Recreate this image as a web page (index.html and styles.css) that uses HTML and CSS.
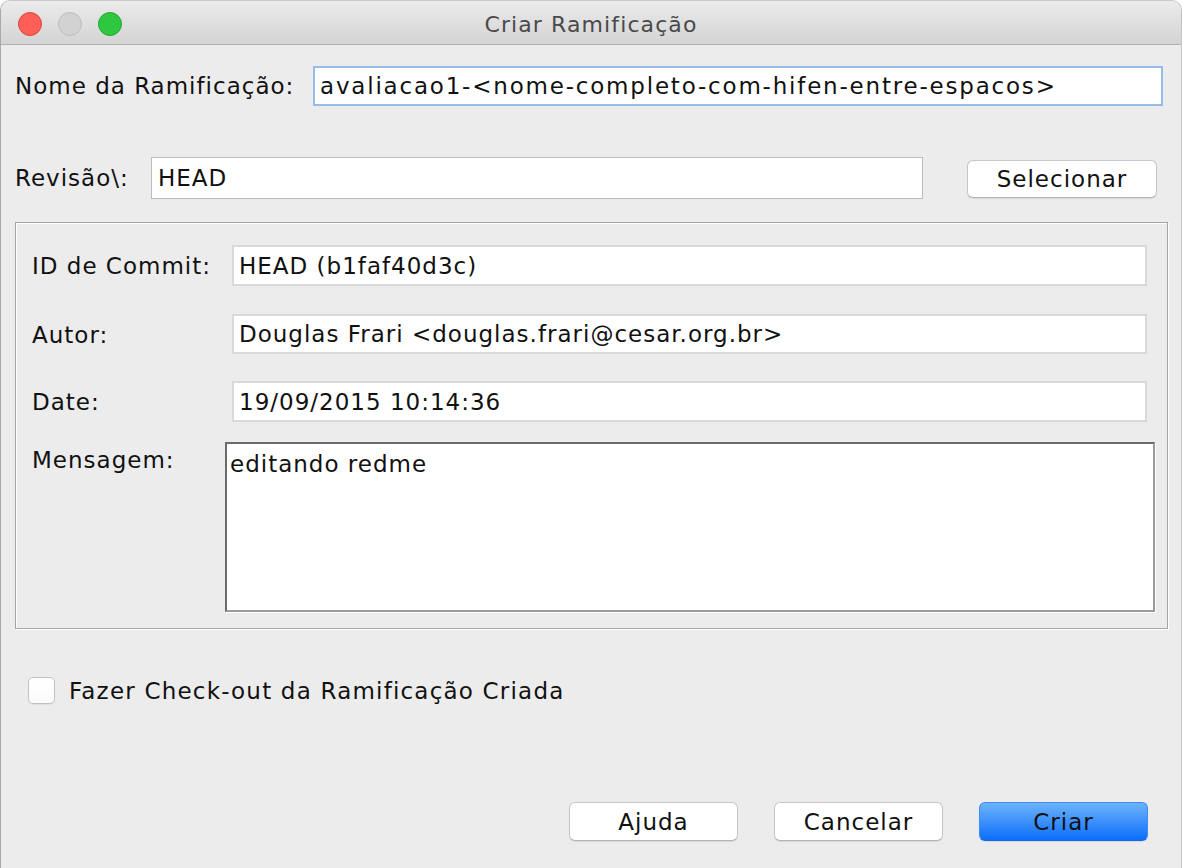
FILE: index.html
```html
<!DOCTYPE html>
<html lang="pt">
<head>
<meta charset="utf-8">
<title>Criar Ramificação</title>
<link rel="stylesheet" href="styles.css">
</head>
<body>
<div class="window">
  <div class="titlebar">
    <div class="lights">
      <span class="light red"></span>
      <span class="light gray"></span>
      <span class="light green"></span>
    </div>
    <div class="title">Criar Ramificação</div>
  </div>
  <div class="content">
    <div class="row row-name">
      <div class="label label-name">Nome da Ramificação:</div>
      <div class="field field-focus field-name">avaliacao1-&lt;nome-completo-com-hifen-entre-espacos&gt;</div>
    </div>
    <div class="row row-rev">
      <div class="label label-rev">Revisão\:</div>
      <div class="field field-plain field-rev">HEAD</div>
      <button class="btn btn-select">Selecionar</button>
    </div>
    <div class="panel">
      <div class="prow prow-1">
        <div class="plabel">ID de Commit:</div>
        <div class="field field-ro pfield">HEAD (b1faf40d3c)</div>
      </div>
      <div class="prow prow-2">
        <div class="plabel">Autor:</div>
        <div class="field field-ro pfield">Douglas Frari &lt;douglas.frari@cesar.org.br&gt;</div>
      </div>
      <div class="prow prow-3">
        <div class="plabel">Date:</div>
        <div class="field field-ro pfield">19/09/2015 10:14:36</div>
      </div>
      <div class="prow prow-msg">
        <div class="plabel plabel-msg">Mensagem:</div>
        <div class="textarea">editando redme</div>
      </div>
    </div>
    <div class="check-row">
      <span class="checkbox"></span>
      <span class="check-label">Fazer Check-out da Ramificação Criada</span>
    </div>
    <div class="spacer"></div>
    <div class="buttons">
      <button class="btn btn-foot">Ajuda</button>
      <button class="btn btn-foot">Cancelar</button>
      <button class="btn btn-foot btn-primary">Criar</button>
    </div>
  </div>
</div>
</body>
</html>
```

FILE: styles.css
```css
html, body {
  margin: 0;
  padding: 0;
  background: #ffffff;
}

body {
  font-family: "DejaVu Sans", "Liberation Sans", sans-serif;
  font-size: 23px;
  letter-spacing: 1px;
  color: #111;
}

.window {
  width: 1182px;
  height: 868px;
  box-sizing: border-box;
  background: #ececec;
  border-left: 1px solid #a9a9a9;
  border-right: 1px solid #c4c4c4;
  border-top: 1px solid #c9c9c9;
  border-radius: 10px 10px 0 0;
  overflow: hidden;
  display: flex;
  flex-direction: column;
}

.titlebar {
  height: 43px;
  border-bottom: 1px solid #b2b2b2;
  background: linear-gradient(#ebebeb, #d4d4d4);
  position: relative;
  display: flex;
  align-items: center;
  justify-content: center;
  flex-shrink: 0;
}

.lights {
  position: absolute;
  left: 17px;
  top: 11px;
  display: flex;
  gap: 16px;
}

.light {
  width: 22px;
  height: 22px;
  border-radius: 50%;
  border: 1px solid;
}

.red { background: #fd5f57; border-color: #e0443e; }
.gray { background: #d2d2d2; border-color: #bdbdbd; }
.green { background: #2dc840; border-color: #24a732; }

.title {
  font-size: 22px;
  letter-spacing: 1.1px;
  color: #4a4a4a;
  margin-top: 3px;
}

.content {
  flex: 1;
  display: flex;
  flex-direction: column;
  padding: 21px 18px 27px 14px;
}

.row {
  display: flex;
  align-items: flex-start;
}

.label {
  flex-shrink: 0;
  height: 40px;
  line-height: 41px;
}

.label-name { width: 298px; }
.label-rev { width: 136px; height: 42px; line-height: 43px; }

.field {
  box-sizing: border-box;
  background: #fff;
  padding: 0 5px;
  white-space: nowrap;
  overflow: hidden;
}

.field-name {
  width: 850px;
  height: 40px;
  line-height: 37px;
  border: 2px solid #97bcea;
  letter-spacing: 1.8px;
}

.row-rev { margin-top: 51px; }

.field-rev {
  width: 772px;
  height: 42px;
  line-height: 41px;
  border: 1px solid #bcbcbc;
  padding-left: 6px;
}

.btn {
  font-family: inherit;
  font-size: 23px;
  letter-spacing: 1px;
  color: #111;
  background: #fff;
  border: 1px solid #c6c6c6;
  border-bottom-color: #b3b3b3;
  border-radius: 6px;
  box-shadow: 0 1px 1px rgba(0,0,0,0.08);
  padding: 0;
  box-sizing: border-box;
}

.btn-select {
  width: 190px;
  height: 38px;
  margin-left: 44px;
  margin-top: 3px;
}

.panel {
  margin-top: 23px;
  margin-left: 0;
  width: 1153px;
  height: 407px;
  box-sizing: border-box;
  border: 1px solid #a5a5a5;
  box-shadow: 1px 1px 0 #ffffff, inset 1px 1px 0 #ffffff;
  padding: 22px 0 0 16px;
  display: flex;
  flex-direction: column;
}

.prow {
  display: flex;
  align-items: flex-start;
}

.prow-2 { margin-top: 28px; }
.prow-3 { margin-top: 27px; }
.prow-msg { margin-top: 20px; }

.plabel {
  width: 200px;
  height: 40px;
  line-height: 42px;
  flex-shrink: 0;
}

.plabel-msg {
  width: 193px;
  line-height: 37px;
}

.field-ro {
  border: 2px solid #d9d9d9;
}

.pfield {
  width: 915px;
  height: 41px;
  line-height: 38px;
}

.prow-2 .pfield { height: 40px; line-height: 37px; }

.textarea {
  width: 930px;
  height: 170px;
  box-sizing: border-box;
  background: #fff;
  border: 2px solid;
  border-color: #6b6b6b #9b9b9b #9b9b9b #6b6b6b;
  box-shadow: 1px 1px 0 #ffffff;
  padding: 4px 3px;
  line-height: 33px;
}

.check-row {
  margin-top: 48px;
  display: flex;
  align-items: center;
  margin-left: 13px;
}

.check-label {
  letter-spacing: 1.2px;
  margin-top: 1px;
}

.checkbox {
  width: 27px;
  height: 27px;
  box-sizing: border-box;
  border: 1px solid #c1c1c1;
  border-radius: 5px;
  background: linear-gradient(#ffffff, #fbfbfb);
  box-shadow: 0 1px 1px rgba(0,0,0,0.05);
  margin-right: 14px;
}

.spacer { flex: 1; }

.buttons {
  display: flex;
  justify-content: flex-end;
  gap: 36px;
  padding-right: 15px;
}

.btn-foot {
  width: 169px;
  height: 39px;
}

.btn-primary {
  background: linear-gradient(#6cb3fa, #0d6efd);
  border-color: #3b8cf5;
  border-bottom-color: #1a64e6;
}
```
